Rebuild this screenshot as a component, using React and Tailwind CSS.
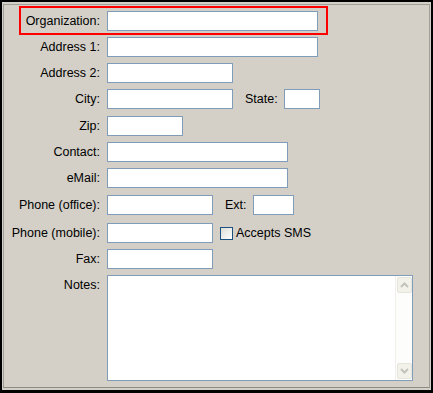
const font = { fontFamily: '"Liberation Sans", Arial, sans-serif' };

function Field({ w }) {
  return <div className={`h-[20px] border border-[#7f9db9] bg-white ${w}`} />;
}

function Label({ children }) {
  return (
    <div className="w-[96px] shrink-0 text-right leading-[20px] whitespace-nowrap">
      {children}
    </div>
  );
}

function Row({ label, className = "", children }) {
  return (
    <div className={`flex h-[20px] items-center ${className}`}>
      <Label>{label}</Label>
      <div className="ml-[7px] flex items-center">{children}</div>
    </div>
  );
}

function Chevron({ up }) {
  return (
    <svg width="9" height="6" viewBox="0 0 9 6" className="block">
      <path
        d={up ? "M1 5 L4.5 1.5 L8 5" : "M1 1 L4.5 4.5 L8 1"}
        fill="none"
        stroke="#c4c2bb"
        strokeWidth="2"
      />
    </svg>
  );
}

function ScrollButton({ up }) {
  return (
    <div className="flex h-[16px] w-[15px] items-center justify-center rounded-[2px] border border-[#e6e4dc] bg-[#f2f1ea]">
      <Chevron up={up} />
    </div>
  );
}

export default function App() {
  return (
    <div
      className="relative h-[393px] w-[433px] border-t-2 border-l-2 border-r-2 border-b-[3px] border-black bg-[#d4d0c8] pt-[2px] pl-[1px] pr-[1px] pb-[2px] text-[12.5px] text-black"
      style={font}
    >
      <div className="h-full border border-[#a09f9a] border-b-[#8c8b86] pt-[6px]">
        <Row label="Organization:">
          <Field w="w-[211px]" />
        </Row>
        <Row label="Address 1:" className="mt-[6px]">
          <Field w="w-[211px]" />
        </Row>
        <Row label="Address 2:" className="mt-[6px]">
          <Field w="w-[126px]" />
        </Row>
        <Row label="City:" className="mt-[6px]">
          <Field w="w-[126px]" />
          <span className="ml-[12px] mr-[6px]">State:</span>
          <Field w="w-[36px]" />
        </Row>
        <Row label="Zip:" className="mt-[7px]">
          <Field w="w-[76px]" />
        </Row>
        <Row label="Contact:" className="mt-[6px]">
          <Field w="w-[181px]" />
        </Row>
        <Row label="eMail:" className="mt-[6px]">
          <Field w="w-[181px]" />
        </Row>
        <Row label="Phone (office):" className="mt-[7px]">
          <Field w="w-[106px]" />
          <span className="ml-[12px] mr-[6px]">Ext:</span>
          <Field w="w-[41px]" />
        </Row>
        <Row label="Phone (mobile):" className="mt-[8px]">
          <Field w="w-[106px]" />
          <div className="ml-[7px] h-[13px] w-[13px] border border-[#1c5180] bg-gradient-to-br from-[#dcdcd7] to-white" />
          <span className="ml-[3px]">Accepts SMS</span>
        </Row>
        <Row label="Fax:" className="mt-[6px]">
          <Field w="w-[106px]" />
        </Row>
        <div className="mt-[6px] flex">
          <Label>Notes:</Label>
          <div className="ml-[7px] flex h-[106px] w-[306px] justify-end border border-[#7f9db9] bg-white">
            <div className="flex w-[17px] flex-col justify-between border-l border-[#f0efea] bg-[#fdfdfb] py-[1px] pl-[1px]">
              <ScrollButton up />
              <ScrollButton />
            </div>
          </div>
        </div>
      </div>
      <div className="pointer-events-none absolute left-[17px] top-[4px] h-[29px] w-[309px] border-2 border-[#ff0000]" />
    </div>
  );
}
